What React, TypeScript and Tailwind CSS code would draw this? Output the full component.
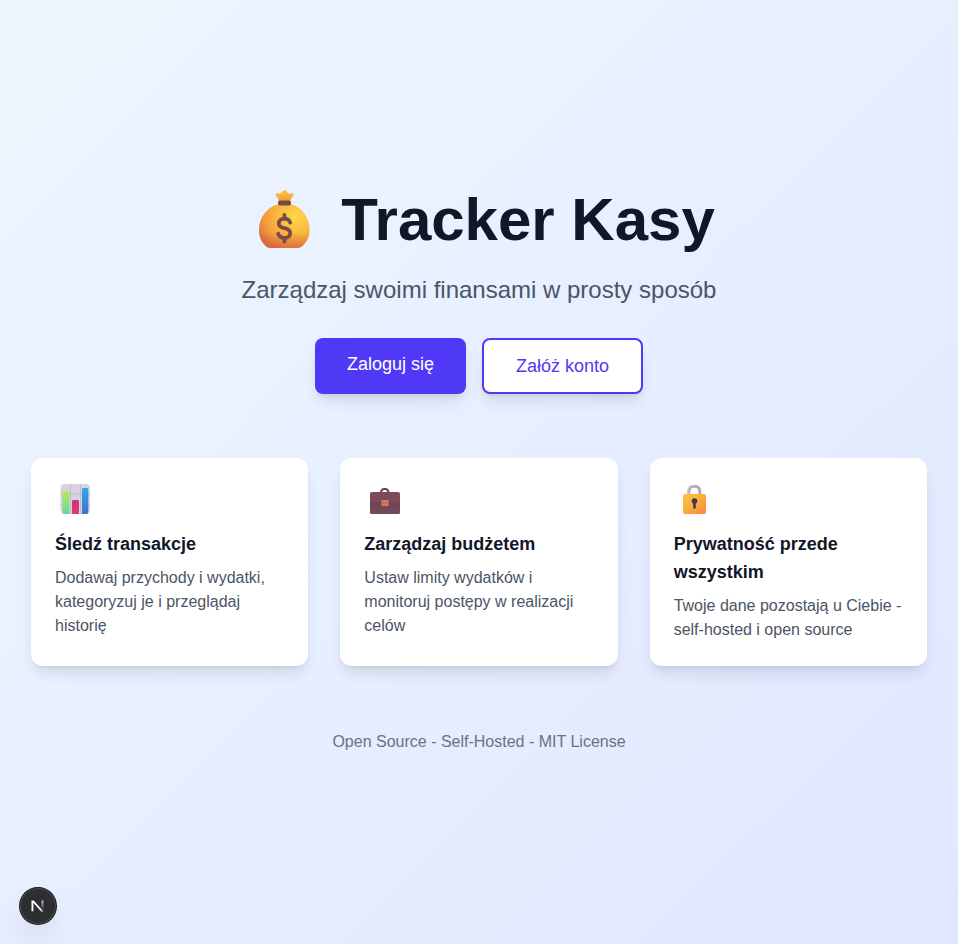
import React from "react";

function MoneyBagIcon() {
  return (
    <svg viewBox="0 0 82 60" className="h-[60px] w-[82px] shrink-0" role="img" aria-label="Worek pieniędzy">
      <defs>
        <radialGradient id="bag-body" cx="0.72" cy="0.3" r="0.82">
          <stop offset="0" stopColor="#ffd84e" />
          <stop offset="0.4" stopColor="#fcbc3e" />
          <stop offset="0.75" stopColor="#f39c3b" />
          <stop offset="1" stopColor="#d8703f" />
        </radialGradient>
        <linearGradient id="bag-shade" x1="0" y1="0" x2="0" y2="1">
          <stop offset="0.65" stopColor="#d8603f" stopOpacity="0" />
          <stop offset="1" stopColor="#d8603f" stopOpacity="0.6" />
        </linearGradient>
        <linearGradient id="bag-top" x1="0" y1="0" x2="0" y2="1">
          <stop offset="0" stopColor="#ffc83d" />
          <stop offset="1" stopColor="#f09a3a" />
        </linearGradient>
      </defs>
      <path d="M36 11.5 C35.6 9 34.4 7.4 33 5.4 C32.2 4.2 33 3 34.4 3.2 L37.4 3.8 L40.2 0.6 C41 -0.2 42.2 -0.2 43 0.6 L45.6 3.8 L48.8 3.2 C50.2 3 51 4.2 50.2 5.4 C48.8 7.4 47.6 9 47.2 11.5 Z" fill="url(#bag-top)" />
      <path id="bag" d="M36 14 C25 16.5 16 26.5 16 40 C16 47 18.5 52.5 23 56.2 C25 57.8 27 58 30 58 H52 C55 58 57 57.8 59 56.2 C63.5 52.5 66.5 47 66.5 40 C66.5 26.5 58 16.5 47 14 Z" fill="url(#bag-body)" />
      <path d="M36 14 C25 16.5 16 26.5 16 40 C16 47 18.5 52.5 23 56.2 C25 57.8 27 58 30 58 H52 C55 58 57 57.8 59 56.2 C63.5 52.5 66.5 47 66.5 40 C66.5 26.5 58 16.5 47 14 Z" fill="url(#bag-shade)" />
      <rect x="35" y="10.5" width="13" height="5" rx="2" fill="#754a47" />
      <path d="M47.2 32.6 C46.2 29.8 44.2 28.6 41.4 28.6 C38 28.6 35.8 30.6 35.8 33.4 C35.8 36.4 38.4 37.5 41.4 38.2 C44.8 39 47.2 40.3 47.2 43.2 C47.2 46.2 44.8 48 41.4 48 C38.2 48 36 46.6 35.2 43.8" fill="none" stroke="#7a4b47" strokeWidth="3.8" strokeLinecap="round" />
      <path d="M41.4 25 V28.5 M41.4 48 V51.5" stroke="#7a4b47" strokeWidth="3.8" strokeLinecap="round" />
    </svg>
  );
}

function ChartIcon() {
  return (
    <svg viewBox="0 0 41 36" className="h-9 w-[41px]" aria-hidden="true">
      <defs>
        <linearGradient id="bar-green" x1="0" y1="0" x2="0" y2="1">
          <stop offset="0" stopColor="#b9ea51" />
          <stop offset="1" stopColor="#61d99b" />
        </linearGradient>
        <linearGradient id="bar-pink" x1="0" y1="0" x2="0" y2="1">
          <stop offset="0" stopColor="#cf2f7c" />
          <stop offset="1" stopColor="#e63d72" />
        </linearGradient>
        <linearGradient id="bar-blue" x1="0" y1="0" x2="0" y2="1">
          <stop offset="0" stopColor="#2fa9ef" />
          <stop offset="1" stopColor="#4171cc" />
        </linearGradient>
      </defs>
      <rect x="5.5" y="2" width="29.5" height="30" rx="4" fill="#d9d2e0" />
      <path d="M15.5 2 V32 M25.5 2 V32 M5.5 12 H35 M5.5 22.5 H35" stroke="#c3bbcc" strokeWidth="1" />
      <path d="M7.5 10.3 Q7.5 9 9 9 H13 Q14.3 9 14.3 10.3 V32 H9 Q7.5 32 7.5 30 Z" fill="url(#bar-green)" />
      <path d="M17 19.3 Q17 18 18.5 18 H22.5 Q24 18 24 19.3 V32 H17 Z" fill="url(#bar-pink)" />
      <path d="M27 7.3 Q27 6 28.5 6 H32 Q33.3 6 33.3 7.3 V30 Q33.3 32 31.5 32 H27 Z" fill="url(#bar-blue)" />
    </svg>
  );
}

function BriefcaseIcon() {
  return (
    <svg viewBox="0 0 41 36" className="h-9 w-[41px]" aria-hidden="true">
      <defs>
        <linearGradient id="case-body" x1="0" y1="0" x2="0" y2="1">
          <stop offset="0" stopColor="#6a4253" />
          <stop offset="1" stopColor="#774a59" />
        </linearGradient>
      </defs>
      <path d="M17 11 C17 8 18.4 7 20.5 7 H21 C23.1 7 24.5 8 24.5 11" fill="none" stroke="#6b4049" strokeWidth="2" />
      <path d="M6 17 H36 V30.5 Q36 32 34.5 32 H7.5 Q6 32 6 30.5 Z" fill="url(#case-body)" />
      <path d="M6 12 Q6 10 8 10 H34 Q36 10 36 12 V18.5 Q36 20.5 33.5 20.5 H8.5 Q6 20.5 6 18.5 Z" fill="#7c4a58" />
      <rect x="17.3" y="18" width="7.4" height="6" rx="1" fill="#d17b5c" />
      <path d="M18 21 H24" stroke="#b9654f" strokeWidth="1" />
    </svg>
  );
}

function LockIcon() {
  return (
    <svg viewBox="0 0 41 36" className="h-9 w-[41px]" aria-hidden="true">
      <defs>
        <linearGradient id="lock-body" x1="0" y1="0" x2="1" y2="1">
          <stop offset="0" stopColor="#fcc43e" />
          <stop offset="0.5" stopColor="#f9ae3b" />
          <stop offset="1" stopColor="#f9834c" />
        </linearGradient>
      </defs>
      <path d="M14.8 16 V9.8 Q14.8 4.2 20.3 4.2 Q25.8 4.2 25.8 9.8 V16" fill="none" stroke="#b5abbd" strokeWidth="3" />
      <path d="M14.2 15 V9.8 Q14.2 3.5 20.3 3.5" fill="none" stroke="#d1c9d7" strokeWidth="1" />
      <rect x="9" y="12" width="23" height="20" rx="2" fill="url(#lock-body)" />
      <circle cx="20.5" cy="19" r="2.8" fill="#4c3150" />
      <path d="M20.5 20 V25.5" stroke="#4c3150" strokeWidth="2.6" strokeLinecap="round" />
    </svg>
  );
}

const features = [
  {
    icon: <ChartIcon />,
    title: "Śledź transakcje",
    text: "Dodawaj przychody i wydatki, kategoryzuj je i przeglądaj historię",
  },
  {
    icon: <BriefcaseIcon />,
    title: "Zarządzaj budżetem",
    text: "Ustaw limity wydatków i monitoruj postępy w realizacji celów",
  },
  {
    icon: <LockIcon />,
    title: "Prywatność przede wszystkim",
    text: "Twoje dane pozostają u Ciebie - self-hosted i open source",
  },
];

function DevToolsButton() {
  return (
    <button
      type="button"
      aria-label="Open Next.js Dev Tools"
      className="fixed bottom-5 left-5 flex size-9 items-center justify-center rounded-full bg-[#2d2e31] shadow-[0_0_0_1px_#171717,inset_0_0_0_1px_rgba(255,255,255,0.14),0_16px_32px_-8px_rgba(0,0,0,0.24)]"
    >
      <svg viewBox="0 0 36 36" className="size-9" fill="none" aria-hidden="true">
        <defs>
          <linearGradient id="n-diagonal" gradientUnits="userSpaceOnUse" x1="18" y1="18" x2="23.5" y2="24.5">
            <stop stopColor="#fff" />
            <stop offset="0.5" stopColor="#fff" />
            <stop offset="1" stopColor="#fff" stopOpacity="0.2" />
          </linearGradient>
          <linearGradient id="n-stem" gradientUnits="userSpaceOnUse" x1="22" y1="12" x2="22" y2="22">
            <stop stopColor="#fff" stopOpacity="0.8" />
            <stop offset="1" stopColor="#fff" stopOpacity="0" />
          </linearGradient>
        </defs>
        <path d="M11.5 12.5 H13.8 L23.4 23.6 L22 24.6 L13.4 14.8 V23.3 H11.5 Z" fill="url(#n-diagonal)" />
        <path d="M22.5 12.5 V22" stroke="url(#n-stem)" strokeWidth="1.9" />
      </svg>
    </button>
  );
}

export default function App() {
  return (
    <div className="flex min-h-screen items-center justify-center bg-linear-to-br from-blue-50 to-indigo-100 p-4 font-['Liberation_Sans',Arial,sans-serif]">
      <main className="w-full max-w-4xl text-center">
        <h1 className="mb-6 flex items-center justify-center gap-4 text-6xl font-bold text-gray-900">
          <MoneyBagIcon />
          Tracker Kasy
        </h1>
        <p className="mb-8 text-2xl text-gray-600">Zarządzaj swoimi finansami w prosty sposób</p>
        <div className="flex justify-center gap-4">
          <a href="#login" className="rounded-lg bg-indigo-600 px-8 py-3 text-lg text-white shadow-lg">
            Zaloguj się
          </a>
          <a href="#register" className="rounded-lg border-2 border-indigo-600 bg-white px-8 py-3 text-lg text-indigo-600 shadow-lg">
            Załóż konto
          </a>
        </div>
        <div className="mt-16 grid gap-8 text-left md:grid-cols-3">
          {features.map((feature) => (
            <section key={feature.title} className="rounded-xl bg-white p-6 shadow-lg">
              <div className="mb-3">{feature.icon}</div>
              <h2 className="mb-2 text-lg font-semibold text-gray-900">{feature.title}</h2>
              <p className="text-base text-gray-600">{feature.text}</p>
            </section>
          ))}
        </div>
        <footer className="mt-16 text-base text-gray-500">Open Source - Self-Hosted - MIT License</footer>
      </main>
      <DevToolsButton />
    </div>
  );
}
